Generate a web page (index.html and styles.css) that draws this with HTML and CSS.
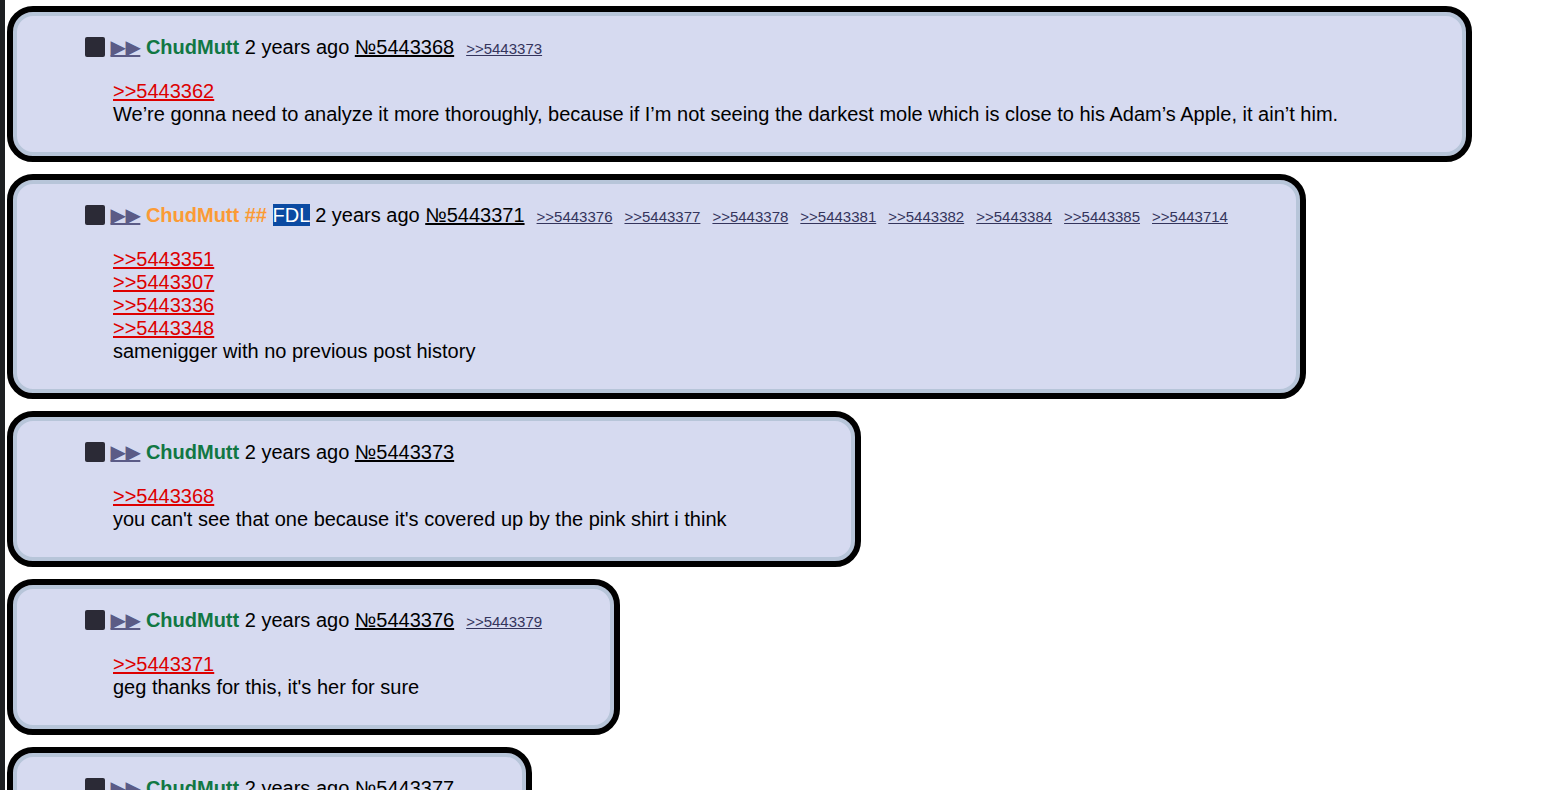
FILE: index.html
```html
<!DOCTYPE html>
<html>
<head>
<meta charset="utf-8">
<link rel="stylesheet" href="styles.css">
</head>
<body>
<div class="thread">
  <div class="post">
    <div class="post-header">
      <span class="square"></span> <a class="arrows">▶▶</a> <span class="name">ChudMutt</span> <span class="date">2 years ago</span> <a class="num">№5443368</a><span class="replies"><a>&gt;&gt;5443373</a></span>
    </div>
    <div class="post-body">
      <a class="quote">&gt;&gt;5443362</a><br>
      We’re gonna need to analyze it more thoroughly, because if I’m not seeing the darkest mole which is close to his Adam’s Apple, it ain’t him.
    </div>
  </div>

  <div class="post">
    <div class="post-header">
      <span class="square"></span> <a class="arrows">▶▶</a> <span class="name trip">ChudMutt ## <span class="capcode">FDL</span></span> <span class="date">2 years ago</span> <a class="num">№5443371</a><span class="replies"><a>&gt;&gt;5443376</a><a>&gt;&gt;5443377</a><a>&gt;&gt;5443378</a><a>&gt;&gt;5443381</a><a>&gt;&gt;5443382</a><a>&gt;&gt;5443384</a><a>&gt;&gt;5443385</a><a>&gt;&gt;5443714</a></span>
    </div>
    <div class="post-body">
      <a class="quote">&gt;&gt;5443351</a><br>
      <a class="quote">&gt;&gt;5443307</a><br>
      <a class="quote">&gt;&gt;5443336</a><br>
      <a class="quote">&gt;&gt;5443348</a><br>
      samenigger with no previous post history
    </div>
  </div>

  <div class="post">
    <div class="post-header">
      <span class="square"></span> <a class="arrows">▶▶</a> <span class="name">ChudMutt</span> <span class="date">2 years ago</span> <a class="num">№5443373</a>
    </div>
    <div class="post-body">
      <a class="quote">&gt;&gt;5443368</a><br>
      you can't see that one because it's covered up by the pink shirt i think
    </div>
  </div>

  <div class="post">
    <div class="post-header">
      <span class="square"></span> <a class="arrows">▶▶</a> <span class="name">ChudMutt</span> <span class="date">2 years ago</span> <a class="num">№5443376</a><span class="replies"><a>&gt;&gt;5443379</a></span>
    </div>
    <div class="post-body">
      <a class="quote">&gt;&gt;5443371</a><br>
      geg thanks for this, it's her for sure
    </div>
  </div>

  <div class="post">
    <div class="post-header">
      <span class="square"></span> <a class="arrows">▶▶</a> <span class="name">ChudMutt</span> <span class="date">2 years ago</span> <a class="num">№5443377</a>
    </div>
    <div class="post-body">
      <a class="quote">&gt;&gt;5443371</a><br>
      based
    </div>
  </div>
</div>
</body>
</html>
```

FILE: styles.css
```css
html, body {
  margin: 0;
  padding: 0;
  background: #ffffff;
}

body {
  font-family: "Liberation Sans", Arial, sans-serif;
  font-size: 20px;
  line-height: 23px;
  color: #000000;
}

.thread {
  border-left: 5px solid #1d1f21;
  padding: 6px 0 12px 2px;
  min-height: 800px;
}

.post {
  width: fit-content;
  background: #d6daf0;
  border: 6px solid #000000;
  border-radius: 26px;
  box-shadow: inset 0 0 0 4px #b7c5d9;
  padding: 24px 0 30px 0;
  margin-bottom: 12px;
}

.post-header {
  margin: 0 72px 0 72px;
  white-space: nowrap;
  height: 23px;
}

.square {
  display: inline-block;
  width: 20px;
  height: 20px;
  background: #2b2a36;
  border-radius: 2px;
  vertical-align: -3px;
}

.arrows {
  font-family: "DejaVu Sans", sans-serif;
  font-size: 20px;
  line-height: 1;
  color: #5b5b86;
  text-decoration: underline;
  text-decoration-color: #5b5b86;
  letter-spacing: -0.5px;
}

.name {
  color: #117743;
  font-weight: bold;
}

.name.trip {
  color: #fb9b35;
}

.capcode {
  font-weight: normal;
  color: #ffffff;
  background: #0b4aa2;
}

.num {
  color: #000000;
  text-decoration: underline;
}

.replies {
  font-size: 15px;
  line-height: 1;
}

.replies a {
  color: #34345c;
  text-decoration: underline;
  margin-left: 12px;
}

.post-body {
  margin: 21px 128px 0 100px;
  white-space: nowrap;
}

.quote {
  color: #dd0000;
  text-decoration: underline;
}
```
